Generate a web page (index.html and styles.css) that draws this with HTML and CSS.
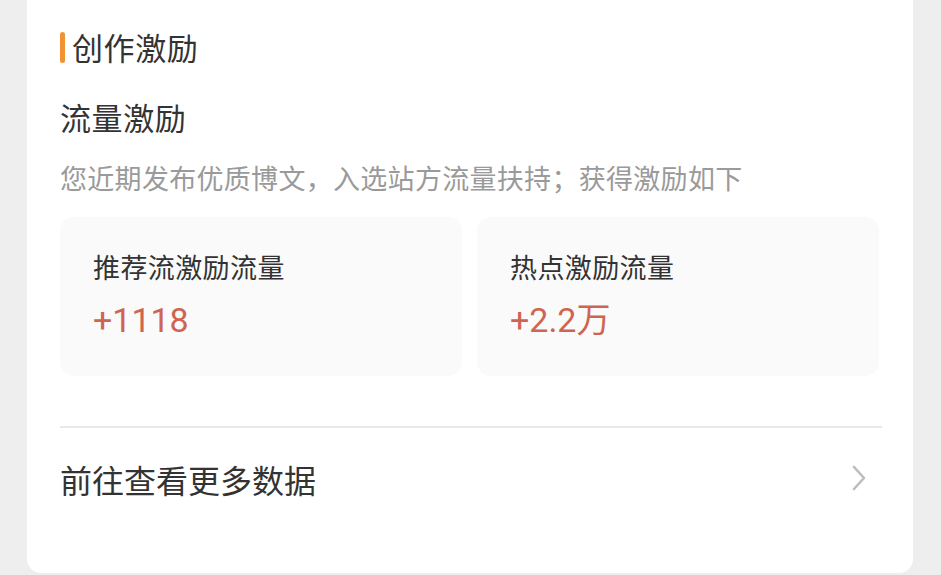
FILE: index.html
```html
<!DOCTYPE html>
<html lang="zh-CN">
<head>
  <meta charset="UTF-8" />
  <meta name="viewport" content="width=device-width, initial-scale=1.0" />
  <title>创作激励</title>
  <link rel="stylesheet" href="styles.css">
</head>
<body>
  <div class="panel">
    <div class="head">
      <span class="bar"></span>
      <h2>创作激励</h2>
    </div>

    <h3>流量激励</h3>
    <p class="sub">您近期发布优质博文，入选站方流量扶持；获得激励如下</p>

    <div class="stats">
      <div class="stat">
        <div class="label">推荐流激励流量</div>
        <div class="num">+1118</div>
      </div>
      <div class="stat">
        <div class="label">热点激励流量</div>
        <div class="num">+2.2万</div>
      </div>
    </div>

    <div class="line"></div>

    <a class="more" href="#">
      <span>前往查看更多数据</span>
      <svg class="arrow" width="16" height="26" viewBox="0 0 16 26">
        <polyline points="3,2 13,13 3,24" fill="none" stroke="#bdbdbd" stroke-width="2.6" stroke-linecap="round" stroke-linejoin="round" />
      </svg>
    </a>
  </div>
</body>
</html>
```

FILE: styles.css
```css
* { box-sizing: border-box; }
body {
  margin: 0;
  background: #eeeeee;
  font-family: "Noto Sans CJK SC", "Noto Sans", sans-serif;
  color: #333;
}
.panel {
  margin: 0 28px 0 27px;
  background: #fff;
  border-radius: 0 0 14px 14px;
  padding: 27px 31px 72px 33px;
  height: 573px;
}
.head {
  display: flex;
  align-items: center;
  height: 40px;
}
.bar {
  width: 5px;
  height: 31px;
  border-radius: 3px;
  background: #ef9333;
  margin-right: 7px;
}
.head h2 {
  margin: 0;
  font-size: 31px;
  font-weight: 400;
  line-height: 40px;
  letter-spacing: 0.6px;
  color: #333;
}
h3 {
  margin: 30px 0 0;
  font-size: 31px;
  font-weight: 400;
  line-height: 40px;
  letter-spacing: 0.6px;
  color: #333;
}
.sub {
  margin: 23px 0 0;
  font-size: 27px;
  line-height: 36px;
  letter-spacing: 0.3px;
  color: #9a9a9a;
  white-space: nowrap;
}
.stats {
  display: grid;
  grid-template-columns: 402px 402px;
  gap: 15px;
  margin-top: 21px;
}
.stat {
  background: #fafafa;
  border-radius: 14px;
  height: 159px;
  padding: 32px 33px 0;
}
.label {
  font-size: 27px;
  line-height: 36px;
  letter-spacing: 0.4px;
  color: #333;
}
.num {
  margin-top: 15px;
  font-family: Roboto, "Noto Sans CJK SC", sans-serif;
  font-size: 34px;
  line-height: 40px;
  color: #cf6550;
}
.line {
  margin-top: 50px;
  height: 2px;
  background: #e8e8e8;
}
.more {
  display: flex;
  align-items: center;
  justify-content: space-between;
  margin-top: 31px;
  padding-right: 15px;
  height: 40px;
  text-decoration: none;
  color: #333;
  font-size: 32px;
  line-height: 40px;
}
.arrow { display: block; margin-top: -2px; }
```
